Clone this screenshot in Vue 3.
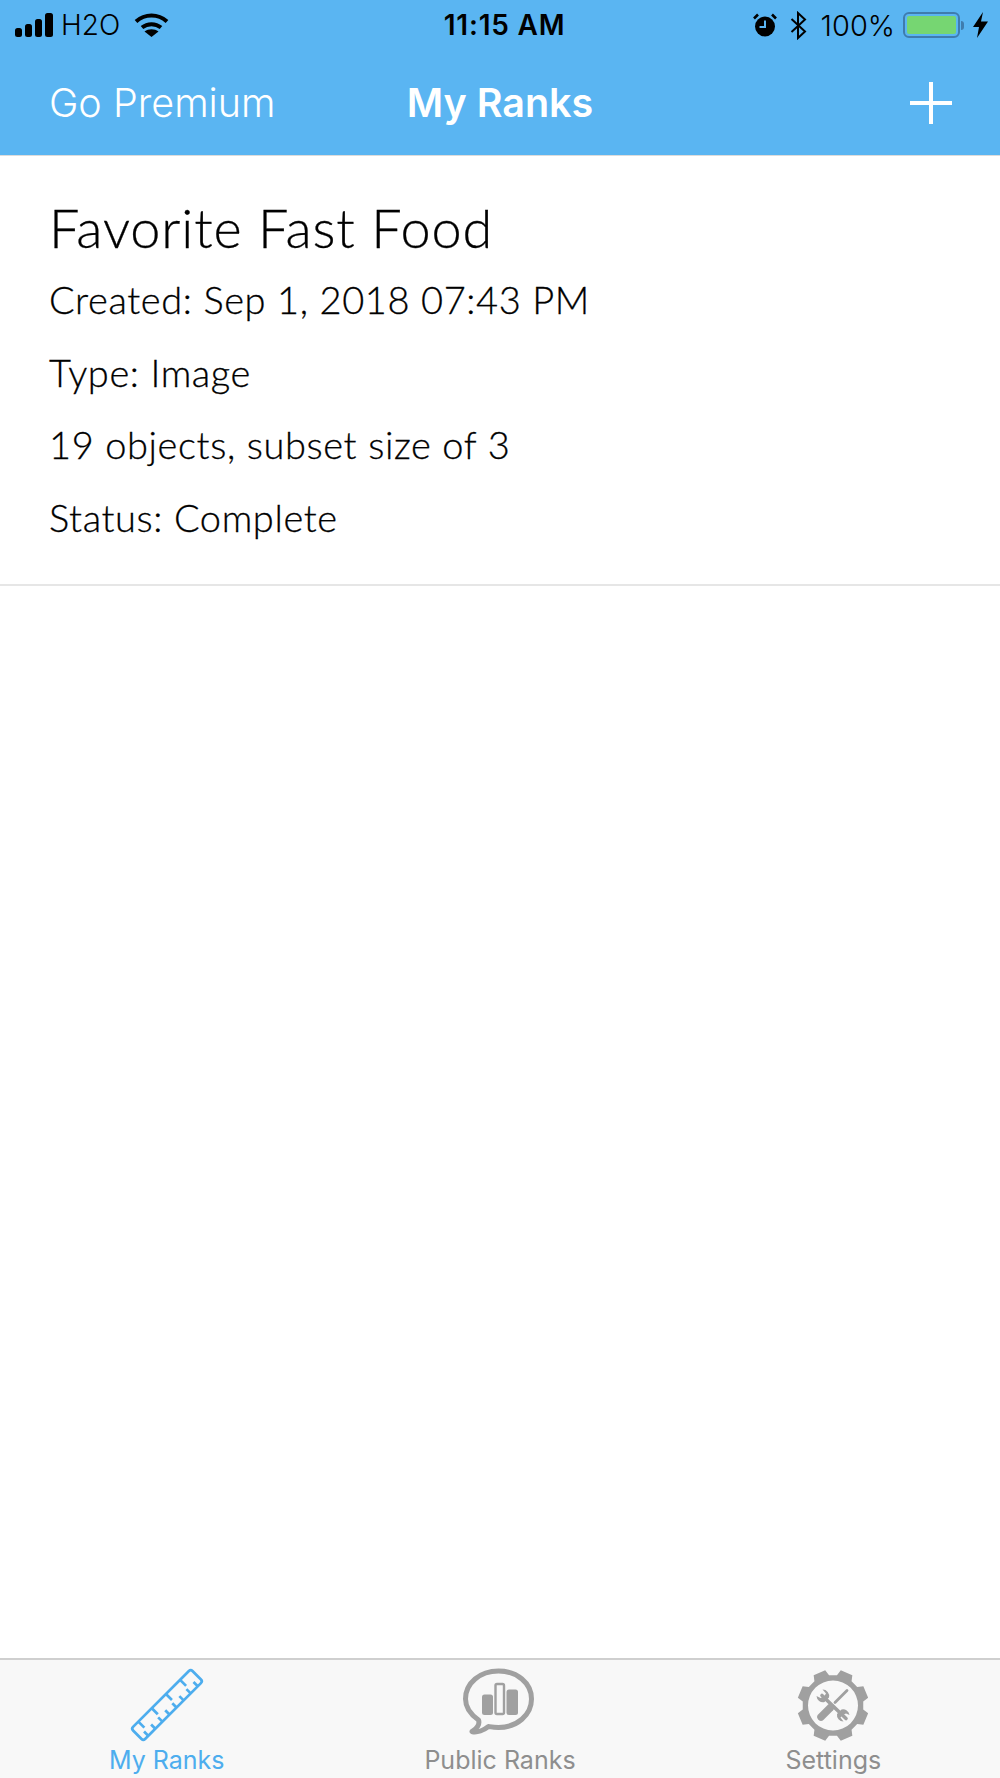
<template>
  <div class="app">
    <header class="top">
      <div class="status-bar">
        <div class="status-left">
          <svg class="signal" width="38" height="24" viewBox="0 0 38 24">
            <rect x="0" y="15" width="7" height="9" rx="2.5" />
            <rect x="10" y="11" width="7" height="13" rx="2.5" />
            <rect x="20" y="6" width="7" height="18" rx="2.5" />
            <rect x="30" y="0" width="8" height="24" rx="2.5" />
          </svg>
          <span class="carrier">H2O</span>
          <svg class="wifi" width="35" height="24" viewBox="0 0 35 24">
            <path d="M2 8.5C11 0.5 24 0.5 33 8.5" />
            <path d="M8 14.5C13.5 10 21.5 10 27 14.5" />
            <path class="wedge" d="M17.5 24L10.5 18.5C14.5 15.5 20.5 15.5 24.5 18.5Z" />
          </svg>
        </div>
        <div class="clock">11:15 AM</div>
        <div class="status-right">
          <svg class="alarm" width="24" height="24" viewBox="0 0 24 24">
            <circle cx="12" cy="13.5" r="10" fill="#000" />
            <path d="M1 5.5L5 1.5M23 5.5L19 1.5" stroke="#000" stroke-width="2.6" fill="none" />
            <path d="M12 7.5V14H6.5" stroke="#5ab5f2" stroke-width="2" fill="none" />
          </svg>
          <svg class="bt" width="17" height="29" viewBox="0 0 17 29">
            <path d="M1.5 8L15 20.5L8 27V2L15 8.5L1.5 21" fill="none" stroke="#000" stroke-width="2" />
          </svg>
          <span class="percent">100%</span>
          <div class="battery"><div class="battery-fill"></div></div>
          <div class="battery-nub"></div>
          <svg class="bolt" width="15" height="26" viewBox="0 0 15 26">
            <path d="M10 0L0 15H6L4 26L15 9.5H8Z" fill="#000" />
          </svg>
        </div>
      </div>
      <nav class="nav-bar">
        <span class="nav-link">Go Premium</span>
        <span class="nav-title">My Ranks</span>
        <div class="nav-add"><span class="plus"></span></div>
      </nav>
    </header>

    <main class="list">
      <article class="rank-item">
        <h2 class="rank-title">{{ rank.title }}</h2>
        <p v-for="line in rank.lines" :key="line" class="rank-line">{{ line }}</p>
      </article>
    </main>

    <footer class="tab-bar">
      <div class="tab active">
        <svg class="tab-icon" width="84" height="84" viewBox="0 0 84 84">
          <g transform="translate(42 44) rotate(-45)" fill="none" stroke="#4dadee" stroke-width="2.7">
            <rect x="-42" y="-8.5" width="84" height="17" rx="2.5" />
            <path v-for="x in topTicks" :key="'t' + x" :d="`M${x} -8.5V0`" />
            <path v-for="x in bottomTicks" :key="'b' + x" :d="`M${x} 8.5V2.5`" />
          </g>
        </svg>
        <span class="tab-label">My Ranks</span>
      </div>
      <div class="tab">
        <svg class="tab-icon" width="84" height="84" viewBox="0 0 84 84">
          <path d="M14 70.5C19 68 22 63 20.5 59C12 53 7.5 46 7.5 38C7.5 22 22 10 40.5 10C59 10 73.5 22 73.5 38C73.5 54 59 66.5 40.5 66.5C36 66.5 33.5 66 30.5 65.5C26 69 19 72 14 70.5Z" fill="none" stroke="#a0a0a0" stroke-width="5" stroke-linejoin="round" />
          <rect x="24" y="33.5" width="11" height="20.5" rx="2.5" fill="#a0a0a0" />
          <rect x="37.5" y="23" width="8.5" height="30" rx="1.5" fill="none" stroke="#a0a0a0" stroke-width="2.4" />
          <rect x="48.5" y="28.5" width="11.5" height="25.5" rx="2.5" fill="#a0a0a0" />
        </svg>
        <span class="tab-label">Public Ranks</span>
      </div>
      <div class="tab">
        <svg class="tab-icon" width="84" height="84" viewBox="0 0 84 84">
          <path :d="gearPath" fill="#a0a0a0" fill-rule="evenodd" />
          <g transform="translate(42 44.5)" fill="none" stroke="#a0a0a0" stroke-linecap="round">
            <path d="M-11 -10L13 13" stroke-width="3.6" />
            <path d="M-16.5 -9.5A6.5 6.5 0 0 0 -8.5 -3.5L-4 -8A6.5 6.5 0 0 0 -10.5 -16L-7 -12L-9 -9L-12.5 -7.5Z" fill="#a0a0a0" stroke="none" />
            <path d="M16.5 9.5A6.5 6.5 0 0 0 8.5 4L4 8.5A6.5 6.5 0 0 0 10.5 16L7.5 12L9.5 9.5L13 8Z" fill="#a0a0a0" stroke="none" />
            <path d="M14 -15L2 -3" stroke-width="2.8" />
            <path d="M-2.5 2L-12 11.5" stroke-width="7.5" />
          </g>
        </svg>
        <span class="tab-label">Settings</span>
      </div>
    </footer>
  </div>
</template>

<script setup>
import { computed } from 'vue';

const rank = {
  title: 'Favorite Fast Food',
  lines: [
    'Created: Sep 1, 2018 07:43 PM',
    'Type: Image',
    '19 objects, subset size of 3',
    'Status: Complete'
  ]
};

const topTicks = [-32, -13, 7, 27];
const bottomTicks = [-35, -25, -15, -5, 5, 15, 25, 35];

const polar = (r, deg) => {
  const a = (deg * Math.PI) / 180;
  return `${(42 + r * Math.cos(a)).toFixed(2)} ${(44.5 + r * Math.sin(a)).toFixed(2)}`;
};

const gearPath = computed(() => {
  const parts = [];
  for (let i = 0; i < 8; i++) {
    const c = 22.5 + i * 45;
    parts.push(`${i === 0 ? 'M' : 'L'}${polar(30.5, c - 15)}`);
    parts.push(`L${polar(36, c - 10)}`);
    parts.push(`L${polar(36, c + 10)}`);
    parts.push(`L${polar(30.5, c + 15)}`);
  }
  parts.push('Z');
  parts.push(`M${polar(25, 0)}A25 25 0 1 0 ${polar(25, 180)}A25 25 0 1 0 ${polar(25, 0)}Z`);
  return parts.join('');
});
</script>

<style scoped>
.app {
  display: flex;
  flex-direction: column;
  width: 1000px;
  height: 1778px;
  background: #fff;
  overflow: hidden;
  font-family: Inter, "Liberation Sans", sans-serif;
}

.top {
  background: #5ab5f2;
  height: 155px;
  border-bottom: 1px solid #dcdcdc;
  box-sizing: content-box;
}

.status-bar {
  display: grid;
  grid-template-columns: 1fr auto 1fr;
  align-items: center;
  height: 50px;
  color: #000;
  font-size: 28px;
}

.status-left {
  display: flex;
  align-items: center;
  padding-left: 15px;
}

.carrier {
  margin-left: 8px;
  font-weight: 300;
}

.wifi {
  margin-left: 14px;
}

.wifi path {
  fill: none;
  stroke: #000;
  stroke-width: 4;
}

.wifi .wedge {
  fill: #000;
  stroke: none;
}

.clock {
  margin-left: 9px;
  font-weight: 600;
  font-size: 28px;
  letter-spacing: 0.8px;
}

.status-right {
  display: flex;
  align-items: center;
  justify-content: flex-end;
  padding-right: 12px;
}

.bt {
  margin-left: 13px;
}

.percent {
  margin-left: 14px;
  font-weight: 300;
  font-size: 29px;
}

.battery {
  margin-left: 8px;
  width: 57px;
  height: 26px;
  box-sizing: border-box;
  border: 2px solid #3f7cae;
  border-radius: 6px;
  padding: 2px;
}

.battery-fill {
  height: 100%;
  background: #76d672;
  border-radius: 2px;
}

.battery-nub {
  width: 3px;
  height: 9px;
  margin-left: 1px;
  background: #3f7cae;
  border-radius: 0 3px 3px 0;
}

.bolt {
  margin-left: 9px;
}

.nav-bar {
  display: grid;
  grid-template-columns: 1fr auto 1fr;
  align-items: center;
  height: 105px;
  color: #fff;
}

.nav-link {
  padding-left: 49px;
  font-size: 39.5px;
  font-weight: 300;
}

.nav-title {
  font-size: 39.5px;
  font-weight: 600;
}

.nav-add {
  display: flex;
  justify-content: flex-end;
  padding-right: 48px;
}

.plus {
  width: 42px;
  height: 42px;
  background:
    linear-gradient(#fff, #fff) center / 4px 100% no-repeat,
    linear-gradient(#fff, #fff) center / 100% 4px no-repeat;
}

.list {
  flex: 1;
}

.rank-item {
  padding: 37px 50px 31px 49px;
  border-bottom: 2px solid #e6e6e6;
  font-family: Lato, "Liberation Sans", sans-serif;
  font-weight: 300;
  color: #000;
  -webkit-text-stroke: 0.3px #000;
}

.rank-title {
  margin: 0;
  font-size: 54px;
  font-weight: 300;
  line-height: 70px;
  letter-spacing: 0.9px;
}

.rank-line {
  margin: 0;
  font-size: 38px;
  line-height: 72.5px;
  letter-spacing: 0.6px;
}

.tab-bar {
  display: grid;
  grid-template-columns: repeat(3, 1fr);
  height: 120px;
  box-sizing: border-box;
  padding-top: 1px;
  background: #f8f8f8;
  border-top: 2px solid #cfcfcf;
}

.tab {
  display: flex;
  flex-direction: column;
  align-items: center;
  color: #8e8e8e;
}

.tab.active {
  color: #4dadee;
}

.tab-icon {
  flex: none;
}

.tab-label {
  font-size: 25px;
  line-height: 30px;
}
</style>
